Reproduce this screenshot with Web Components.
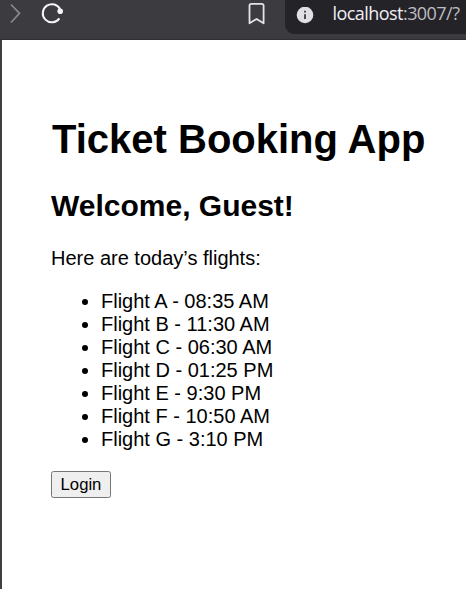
<!DOCTYPE html>
<html lang="en"><head><meta charset="utf-8"><title>Ticket Booking App</title>
<style>html,body{margin:0;height:100%;overflow:hidden;background:#fff}</style></head>
<body><browser-window><browser-toolbar slot="bar">localhost<span style="color:#bdbcc2">:3007/?</span></browser-toolbar>
<ticket-app></ticket-app></browser-window>
<script>
const define=(name,html)=>customElements.define(name,class extends HTMLElement{
  constructor(){super();const t=document.createElement('template');t.innerHTML=html;
    this.attachShadow({mode:'open'}).append(t.content.cloneNode(true));}
});
define('browser-window',`<style>
:host{display:flex;flex-direction:column;height:100vh;box-sizing:border-box}
main{flex:1;min-height:0;background:#fff;border-left:2px solid #403f46}
</style><slot name="bar"></slot><main><slot></slot></main>`);
define('browser-toolbar',`<style>
:host{display:flex;height:40px;box-sizing:border-box;background:#3c3b40;border-bottom:1px solid #302f34;overflow:hidden}
.nav{display:flex;width:285px;flex:none}
svg{display:block;flex:none}
.space{flex:1}
.address{display:flex;flex:1;height:34px;background:#242328;border-radius:0 0 0 9px;font:18px/26px "Open Sans","Noto Sans",sans-serif;color:#f0eff4;white-space:nowrap}
.info{margin:7px 0 0 11px}
.url{margin-left:18.5px;letter-spacing:-.55px}
</style>
<div class="nav">
<svg width="80" height="39" fill="none"><path d="M11 4.5 19.5 13.3 11 22.5" stroke="#89888d" stroke-width="1.7"/><path d="M60.3 9.8A9.1 9.1 0 1 0 59.4 18.4" stroke="#f5f4f8" stroke-width="2"/><circle cx="60.2" cy="11.3" r="2.8" fill="#f5f4f8"/></svg>
<div class="space"></div>
<svg width="37" height="39" fill="none"><path d="M1.5 23.3V5.7Q1.5 3.8 3.4 3.8H13.7Q15.6 3.8 15.6 5.7V23.3L8.6 18.9Z" stroke="#e4e3e8" stroke-width="1.8" stroke-linejoin="round"/></svg>
</div>
<div class="address"><svg class="info" width="18" height="18"><circle cx="9" cy="8" r="8.3" fill="#e0dfe5"/><path d="M9 7.2V12M9 3.7V5.5" stroke="#424147" stroke-width="1.9"/></svg><span class="url"><slot></slot></span></div>`);
define('flight-item',`<style>
:host{display:list-item;line-height:23px}
</style><slot></slot>`);
define('login-button',`<style>
:host{display:block;margin-top:20px}
button{display:block;box-sizing:border-box;width:60px;height:27px;padding:0;border:1px solid #767676;border-radius:2.5px;background:#efefef;color:#000;font:16.67px/24px "Liberation Sans",Arial,sans-serif}
</style><button><slot></slot></button>`);
define('ticket-app',`<style>
:host{display:block;padding:76px 0 0 49px;color:#000;font:20px/23px "Liberation Sans",Arial,sans-serif;white-space:nowrap}
h1{margin:0;font-size:40px;line-height:46px;padding-left:1px}
h2{margin:26px 0 0;font-size:30px;line-height:35px}
p{margin:24px 0 0}
ul{margin:20px 0 0;padding:0 0 0 50px;list-style:disc}
</style><h1>Ticket Booking App</h1><h2>Welcome, Guest!</h2><p>Here are today’s flights:</p>
<ul><flight-item>Flight A - 08:35 AM</flight-item><flight-item>Flight B - 11:30 AM</flight-item><flight-item>Flight C - 06:30 AM</flight-item><flight-item>Flight D - 01:25 PM</flight-item><flight-item>Flight E - 9:30 PM</flight-item><flight-item>Flight F - 10:50 AM</flight-item><flight-item>Flight G - 3:10 PM</flight-item></ul>
<login-button>Login</login-button>`);
</script></body></html>
